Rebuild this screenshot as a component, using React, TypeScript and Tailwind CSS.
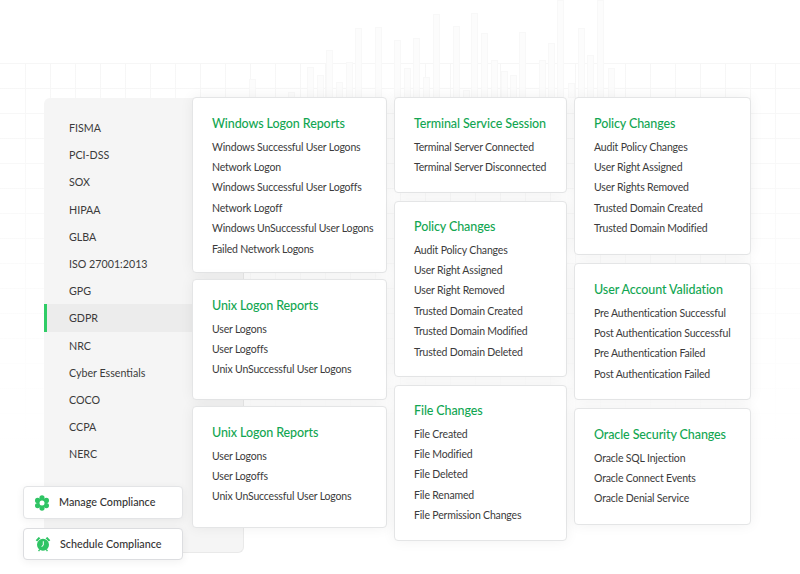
import React from "react";

const frameworks = [
  "FISMA",
  "PCI-DSS",
  "SOX",
  "HIPAA",
  "GLBA",
  "ISO 27001:2013",
  "GPG",
  "GDPR",
  "NRC",
  "Cyber Essentials",
  "COCO",
  "CCPA",
  "NERC",
];

const policyBase = ["Audit Policy Changes", "User Right Assigned"];

const unixRows = ["User Logons", "User Logoffs", "Unix UnSuccessful User Logons"];

// x, top of each bar in the faded chart behind the cards
const bars: [number, number][] = [
  [249, 79], [288, 92], [307, 67], [317, 75], [326, 50], [336, 82], [346, 62], [355, 28],
  [375, 27], [394, 40], [404, 68], [413, 38], [423, 77], [433, 14], [453, 26], [463, 90],
  [471, 13], [481, 33], [491, 60], [501, 71], [510, 75], [519, 32], [539, 60], [548, 43],
  [557, 0], [568, 83], [578, 28], [587, 55], [597, 0], [608, 68],
];

function Card({ title, rows, className }: { title: string; rows: string[]; className: string }) {
  return (
    <div className={"rounded-[4px] border border-[#e4e5e6] bg-white pl-[19px] shadow-[0_0_14px_rgba(0,0,0,0.06)] " + className}>
      <p className="text-[12.5px] font-medium leading-[18px] tracking-[-0.1px] text-[#12a652]">{title}</p>
      <ul className="mt-[3.5px]">
        {rows.map((r) => (
          <li key={r} className="whitespace-nowrap text-[10.5px] leading-[20.4px] tracking-[-0.17px] text-[#3b3b3b]">
            {r}
          </li>
        ))}
      </ul>
    </div>
  );
}

function GridBackdrop() {
  const xs = Array.from({ length: 32 }, (_, i) => 25.5 + i * 25);
  const ys = Array.from({ length: 16 }, (_, i) => 63.5 + i * 25);
  return (
    <svg className="absolute inset-0" width="800" height="574" viewBox="0 0 800 574" fill="none">
      <defs>
        <linearGradient id="fade" gradientUnits="userSpaceOnUse" x1="0" y1="60" x2="0" y2="450">
          <stop offset="0" stopColor="#f6f6f6" />
          <stop offset="0.6" stopColor="#fbfbfb" />
          <stop offset="1" stopColor="#ffffff" />
        </linearGradient>
      </defs>
      {ys.map((y) => (
        <rect key={y} x="0" y={y - 0.5} width="800" height="1" fill="url(#fade)" />
      ))}
      {xs.map((x) => (
        <rect key={x} x={x - 0.5} y="63" width="1" height="390" fill="url(#fade)" />
      ))}
      {bars.map(([x, y]) => (
        <rect key={x} x={x + 0.5} y={y + 0.5} width="6" height={97 - y} fill="#fcfcfc" stroke="#f8f8f8" />
      ))}
    </svg>
  );
}

export default function App() {
  return (
    <div className="relative h-[574px] w-[800px] overflow-hidden bg-white font-['Lato',sans-serif]">
      <GridBackdrop />

      <div className="relative flex pl-[44px] pt-[97px]">
        <div className="mt-[1px] h-[455px] w-[200px] shrink-0 rounded-[6px] border border-[#e9e9e9] border-l-0 border-t-0 bg-[#f5f5f5] pt-[16px]">
          {frameworks.map((f) => (
            <div
              key={f}
              className={
                f === "GDPR"
                  ? "h-[27.2px] border-l-[3px] border-[#2fcc66] bg-[#ececec] pl-[22px] text-[10.7px] leading-[27.2px] text-[#3b3b3b]"
                  : "h-[27.2px] pl-[25px] text-[10.7px] leading-[27.2px] text-[#3b3b3b]"
              }
            >
              {f}
            </div>
          ))}
        </div>

        <div className="relative ml-[-52px] flex gap-[7px]">
          <div className="flex w-[195px] flex-col gap-[6px]">
            <Card
              title="Windows Logon Reports"
              className="h-[176px] pt-[17px]"
              rows={[
                "Windows Successful User Logons",
                "Network Logon",
                "Windows Successful User Logoffs",
                "Network Logoff",
                "Windows UnSuccessful User Logons",
                "Failed Network Logons",
              ]}
            />
            <Card title="Unix Logon Reports" className="h-[121px] pt-[17px]" rows={unixRows} />
            <Card title="Unix Logon Reports" className="h-[122px] pt-[17px]" rows={unixRows} />
          </div>

          <div className="flex w-[173px] flex-col gap-[8px]">
            <Card
              title="Terminal Service Session"
              className="h-[96px] pt-[17px]"
              rows={["Terminal Server Connected", "Terminal Server Disconnected"]}
            />
            <Card
              title="Policy Changes"
              className="h-[176px] pt-[16px]"
              rows={[
                ...policyBase,
                "User Right Removed",
                "Trusted Domain Created",
                "Trusted Domain Modified",
                "Trusted Domain Deleted",
              ]}
            />
            <Card
              title="File Changes"
              className="h-[156px] pt-[16px]"
              rows={["File Created", "File Modified", "File Deleted", "File Renamed", "File Permission Changes"]}
            />
          </div>

          <div className="flex w-[177px] flex-col gap-[8px]">
            <Card
              title="Policy Changes"
              className="h-[158px] pt-[17px]"
              rows={[
                ...policyBase,
                "User Rights Removed",
                "Trusted Domain Created",
                "Trusted Domain Modified",
              ]}
            />
            <Card
              title="User Account Validation"
              className="h-[137px] pt-[17px]"
              rows={[
                "Pre Authentication Successful",
                "Post Authentication Successful",
                "Pre Authentication Failed",
                "Post Authentication Failed",
              ]}
            />
            <Card
              title="Oracle Security Changes"
              className="h-[117px] pt-[17px]"
              rows={["Oracle SQL Injection", "Oracle Connect Events", "Oracle Denial Service"]}
            />
          </div>
        </div>
      </div>

      <div className="absolute left-[23px] top-[486px] flex h-[33px] w-[160px] items-center gap-[9px] rounded-[4px] border border-[#e3e4e6] bg-white pl-[10px] text-[10.8px] font-medium text-[#333] shadow-[0_2px_8px_rgba(0,0,0,0.06)]">
        <svg width="16" height="16" viewBox="0 0 16 16" fill="#2fc464">
          <circle cx="8" cy="2.900" r="2.600" />
          <circle cx="8" cy="13.100" r="2.600" />
          <circle cx="3.600" cy="5.400" r="2.600" />
          <circle cx="12.400" cy="5.400" r="2.600" />
          <circle cx="3.600" cy="10.600" r="2.600" />
          <circle cx="12.400" cy="10.600" r="2.600" />
          <circle cx="8" cy="8" r="4" />
          <circle cx="8" cy="8" r="2.500" fill="#ffffff" />
        </svg>
        Manage Compliance
      </div>
      <div className="absolute left-[23px] top-[528px] flex h-[32px] w-[160px] items-center gap-[9px] rounded-[4px] border border-[#dcdde0] bg-white pl-[11px] text-[10.8px] font-medium text-[#333] shadow-[0_2px_8px_rgba(0,0,0,0.06)]">
        <svg width="16" height="16" viewBox="0 0 16 16" fill="#2fc464">
          <path d="M0.700 4.200 3.700 0.900 5.400 2.300 2.200 5.600zM15.300 4.200 12.300 0.900 10.600 2.300 13.800 5.600z" />
          <path d="M3 14.800 4.300 13l1 .7-1.200 1.800zM13 14.800 11.700 13l-1 .7 1.200 1.800z" />
          <path
            fillRule="evenodd"
            d="M8 2.800a6 6 0 1 0 0 12 6 6 0 0 0 0-12zM7.800 5.200h1v3.900l-1.800 2-.7-.7 1.500-1.700z"
          />
        </svg>
        Schedule Compliance
      </div>
    </div>
  );
}
